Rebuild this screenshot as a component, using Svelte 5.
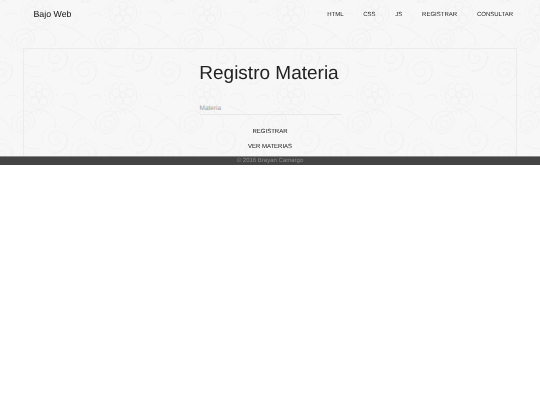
<script>
    const links = ['HTML', 'CSS', 'JS', 'REGISTRAR', 'CONSULTAR'];
</script>

<div class="page">
    <svg class="pattern" width="540" height="156" aria-hidden="true">
        <defs>
            <g id="spiral">
                <path d="M0 0c2-3 6-1 5 3s-7 5-10 1-1-11 5-12 13 4 12 11-8 13-16 11"/>
                <circle r="13" stroke-dasharray="3 2"/>
            </g>
            <g id="flower">
                <circle r="3"/>
                <circle r="14"/>
                <circle r="18" stroke-dasharray="2 3"/>
                <circle cx="0" cy="-7.5" r="4.2"/>
                <circle cx="7.1" cy="-2.3" r="4.2"/>
                <circle cx="4.4" cy="6.1" r="4.2"/>
                <circle cx="-4.4" cy="6.1" r="4.2"/>
                <circle cx="-7.1" cy="-2.3" r="4.2"/>
            </g>
            <pattern id="paisley" width="84" height="82" patternUnits="userSpaceOnUse">
                <g fill="none" stroke="#ececec" stroke-width="0.6">
                    <use href="#flower" x="39" y="13"/>
                    <use href="#spiral" x="0" y="70"/>
                    <use href="#spiral" x="84" y="70"/>
                    <use href="#spiral" x="55" y="57"/>
                    <use href="#spiral" x="0" y="-12"/>
                    <use href="#spiral" x="84" y="-12"/>
                    <path d="M14 34c8-8 18-6 20 2s-4 14-12 16c-8-2-14-10-8-18z"/>
                    <path d="M18 37c6-5 12-4 13 1s-3 10-9 11c-5-2-8-7-4-12z"/>
                    <path d="M22 40c3-2 6-2 6 1s-2 5-5 5-3-4-1-6z"/>
                    <path d="M0 36c6 4 10 8 12 14M60 24c8 2 16 6 24 12M72 46c4-6 8-10 12-10"/>
                    <path d="M26 34c6-6 16-8 24-2s6 12 4 14M20 62c6 4 14 6 20 4M24 72c6 4 12 6 18 4"/>
                    <path d="M62 14c6-4 12-2 14 2s0 8-4 8M4 16c4-4 10-4 14 0"/>
                </g>
            </pattern>
        </defs>
        <rect width="540" height="156" fill="url(#paisley)"/>
    </svg>

    <nav>
        <span class="brand">Bajo Web</span>
        <ul>
            {#each links as link}
                <li>{link}</li>
            {/each}
        </ul>
    </nav>

    <main>
        <h1>Registro Materia</h1>
        <div class="field">Materia</div>
        <div class="action first">REGISTRAR</div>
        <div class="action">VER MATERIAS</div>
    </main>

    <footer><span>© 2016 Brayan Camargo</span></footer>
</div>

<style>
    :global(body) {
        background: #fff;
        font-family: "Liberation Sans", Arial, sans-serif;
        text-rendering: geometricPrecision;
    }
    .page {
        position: relative;
        height: 165px;
        overflow: hidden;
        background: #f7f7f7;
        display: flex;
        flex-direction: column;
    }
    .pattern {
        position: absolute;
        top: 0;
        left: 0;
    }
    nav {
        position: relative;
        height: 27px;
        display: flex;
        justify-content: space-between;
        align-items: center;
        padding: 0 27px 0 33.5px;
    }
    .brand {
        font-size: 8.8px;
        color: #111;
        filter: blur(0.25px);
    }
    ul {
        display: flex;
        gap: 19.75px;
        list-style: none;
        margin: 2px 0 0;
        padding: 0;
        font-size: 6px;
        color: #222;
        filter: blur(0.25px);
    }
    main {
        position: relative;
        flex: 1;
        margin: 21px 23px 0;
        border: 1px solid #ececec;
        border-bottom: 0;
        display: flex;
        flex-direction: column;
        align-items: center;
    }
    h1 {
        margin: 13.5px 2px 0 0;
        font-size: 19px;
        line-height: 22px;
        font-weight: 400;
        color: #222;
        filter: blur(0.2px);
    }
    .field {
        width: 141px;
        margin-top: 19px;
        padding-bottom: 1.5px;
        font-size: 6.5px;
        line-height: 9px;
        color: #999;
        border-bottom: 1px solid #e8e8e8;
    }
    .action {
        margin-top: 7px;
        font-size: 6px;
        line-height: 8px;
        color: #111;
        filter: blur(0.25px);
    }
    .first {
        margin-top: 13px;
    }
    footer {
        position: relative;
        height: 8px;
        line-height: 9px;
        border-top: 1px solid #8a8a8a;
        background: #444;
        color: #8c8c8c;
        font-size: 6px;
        text-align: center;
    }
    footer span {
        display: inline-block;
        filter: blur(0.25px);
    }
</style>
